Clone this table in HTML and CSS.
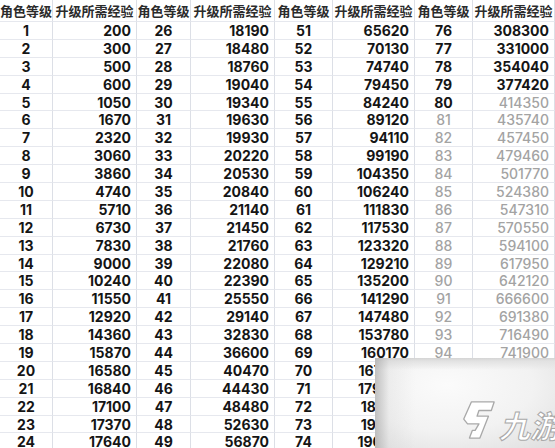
FILE: index.html
```html
<!DOCTYPE html>
<html lang="zh">
<head>
<meta charset="utf-8">
<title>角色等级经验表</title>
<link rel="stylesheet" href="styles.css">
</head>
<body>
<div class="sheet">
<div class="grid">
<div class="c h">角色等级</div><div class="c h">升级所需经验</div><div class="c h">角色等级</div><div class="c h">升级所需经验</div><div class="c h">角色等级</div><div class="c h">升级所需经验</div><div class="c h">角色等级</div><div class="c h">升级所需经验</div>
<div class="c lv">1</div><div class="c xp">200</div><div class="c lv">26</div><div class="c xp">18190</div><div class="c lv">51</div><div class="c xp">65620</div><div class="c lv">76</div><div class="c xp">308300</div>
<div class="c lv">2</div><div class="c xp">300</div><div class="c lv">27</div><div class="c xp">18480</div><div class="c lv">52</div><div class="c xp">70130</div><div class="c lv">77</div><div class="c xp">331000</div>
<div class="c lv">3</div><div class="c xp">500</div><div class="c lv">28</div><div class="c xp">18760</div><div class="c lv">53</div><div class="c xp">74740</div><div class="c lv">78</div><div class="c xp">354040</div>
<div class="c lv">4</div><div class="c xp">600</div><div class="c lv">29</div><div class="c xp">19040</div><div class="c lv">54</div><div class="c xp">79450</div><div class="c lv">79</div><div class="c xp">377420</div>
<div class="c lv">5</div><div class="c xp">1050</div><div class="c lv">30</div><div class="c xp">19340</div><div class="c lv">55</div><div class="c xp">84240</div><div class="c lv">80</div><div class="c xp g">414350</div>
<div class="c lv">6</div><div class="c xp">1670</div><div class="c lv">31</div><div class="c xp">19630</div><div class="c lv">56</div><div class="c xp">89120</div><div class="c lv g">81</div><div class="c xp g">435740</div>
<div class="c lv">7</div><div class="c xp">2320</div><div class="c lv">32</div><div class="c xp">19930</div><div class="c lv">57</div><div class="c xp">94110</div><div class="c lv g">82</div><div class="c xp g">457450</div>
<div class="c lv">8</div><div class="c xp">3060</div><div class="c lv">33</div><div class="c xp">20220</div><div class="c lv">58</div><div class="c xp">99190</div><div class="c lv g">83</div><div class="c xp g">479460</div>
<div class="c lv">9</div><div class="c xp">3860</div><div class="c lv">34</div><div class="c xp">20530</div><div class="c lv">59</div><div class="c xp">104350</div><div class="c lv g">84</div><div class="c xp g">501770</div>
<div class="c lv">10</div><div class="c xp">4740</div><div class="c lv">35</div><div class="c xp">20840</div><div class="c lv">60</div><div class="c xp">106240</div><div class="c lv g">85</div><div class="c xp g">524380</div>
<div class="c lv">11</div><div class="c xp">5710</div><div class="c lv">36</div><div class="c xp">21140</div><div class="c lv">61</div><div class="c xp">111830</div><div class="c lv g">86</div><div class="c xp g">547310</div>
<div class="c lv">12</div><div class="c xp">6730</div><div class="c lv">37</div><div class="c xp">21450</div><div class="c lv">62</div><div class="c xp">117530</div><div class="c lv g">87</div><div class="c xp g">570550</div>
<div class="c lv">13</div><div class="c xp">7830</div><div class="c lv">38</div><div class="c xp">21760</div><div class="c lv">63</div><div class="c xp">123320</div><div class="c lv g">88</div><div class="c xp g">594100</div>
<div class="c lv">14</div><div class="c xp">9000</div><div class="c lv">39</div><div class="c xp">22080</div><div class="c lv">64</div><div class="c xp">129210</div><div class="c lv g">89</div><div class="c xp g">617950</div>
<div class="c lv">15</div><div class="c xp">10240</div><div class="c lv">40</div><div class="c xp">22390</div><div class="c lv">65</div><div class="c xp">135200</div><div class="c lv g">90</div><div class="c xp g">642120</div>
<div class="c lv">16</div><div class="c xp">11550</div><div class="c lv">41</div><div class="c xp">25550</div><div class="c lv">66</div><div class="c xp">141290</div><div class="c lv g">91</div><div class="c xp g">666600</div>
<div class="c lv">17</div><div class="c xp">12920</div><div class="c lv">42</div><div class="c xp">29140</div><div class="c lv">67</div><div class="c xp">147480</div><div class="c lv g">92</div><div class="c xp g">691380</div>
<div class="c lv">18</div><div class="c xp">14360</div><div class="c lv">43</div><div class="c xp">32830</div><div class="c lv">68</div><div class="c xp">153780</div><div class="c lv g">93</div><div class="c xp g">716490</div>
<div class="c lv">19</div><div class="c xp">15870</div><div class="c lv">44</div><div class="c xp">36600</div><div class="c lv">69</div><div class="c xp">160170</div><div class="c lv g">94</div><div class="c xp g">741900</div>
<div class="c lv">20</div><div class="c xp">16580</div><div class="c lv">45</div><div class="c xp">40470</div><div class="c lv">70</div><div class="c xp">167820</div><div class="c lv g">95</div><div class="c xp g">767700</div>
<div class="c lv">21</div><div class="c xp">16840</div><div class="c lv">46</div><div class="c xp">44430</div><div class="c lv">71</div><div class="c xp">179450</div><div class="c lv g">96</div><div class="c xp g">793870</div>
<div class="c lv">22</div><div class="c xp">17100</div><div class="c lv">47</div><div class="c xp">48480</div><div class="c lv">72</div><div class="c xp">182210</div><div class="c lv g">97</div><div class="c xp g">820430</div>
<div class="c lv">23</div><div class="c xp">17370</div><div class="c lv">48</div><div class="c xp">52630</div><div class="c lv">73</div><div class="c xp">194120</div><div class="c lv g">98</div><div class="c xp g">847380</div>
<div class="c lv">24</div><div class="c xp">17640</div><div class="c lv">49</div><div class="c xp">56870</div><div class="c lv">74</div><div class="c xp">196260</div><div class="c lv g">99</div><div class="c xp g">874720</div>
</div>
<div class="mark">
<svg class="mark-icon" viewBox="0 0 40 44" width="38" height="42" aria-hidden="true">
<path d="M13 3 L37 3 L34 12 L21 12 L19 18 L31 18 L22 41 L11 41 L14 33 L17 33 L21 26 L9 26 L5 21 Z" fill="#ffffff" stroke="#a9a9a9" stroke-width="1.4" stroke-linejoin="round"/>
</svg>
<span class="mark-text">九游</span>
</div>
</div>
</body>
</html>
```
FILE: styles.css
```css
html, body {
  margin: 0;
  padding: 0;
  background: #ffffff;
}
.sheet {
  position: relative;
  width: 555px;
  height: 448px;
  overflow: hidden;
}
.grid {
  display: grid;
  grid-template-columns: 53px 84px 54px 84px 58px 82px 58px 82px;
  grid-template-rows: 22px repeat(24, 17.9px);
}
.c {
  box-sizing: border-box;
  border-right: 1px solid #dcdfe6;
  border-bottom: 1px solid #e6e8ee;
  font-family: Inter, "Liberation Sans", Arial, sans-serif;
  font-weight: 700;
  font-size: 14px;
  color: #151515;
  display: flex;
  align-items: center;
  white-space: nowrap;
  overflow: hidden;
}
.h {
  font-family: "Noto Sans CJK SC", "Noto Sans", sans-serif;
  font-size: 13px;
  font-weight: 700;
  color: #2b2b2b;
  justify-content: center;
}
.lv {
  justify-content: center;
}
.xp {
  justify-content: flex-end;
  padding-right: 5px;
}
.g {
  color: #a3a3a3;
  font-weight: 500;
}
.mark {
  position: absolute;
  left: 375px;
  top: 358px;
  right: 0;
  bottom: 0;
  background:
    linear-gradient(to right, rgba(150,150,150,0.55) 0px, rgba(200,200,200,0.2) 14px, rgba(255,255,255,0) 40px),
    linear-gradient(to bottom, #d4d4d4 0px, #e2e2e2 3px, rgba(255,255,255,0) 12px),
    radial-gradient(ellipse 120% 130% at 40% 30%, #fbfbfb 0%, #f2f2f2 40%, #dadada 80%, #c9c9c9 100%);
  display: flex;
  align-items: flex-end;
  justify-content: flex-end;
  gap: 2px;
  padding: 0 0 7px 0;
}
.mark-icon {
  display: block;
}
.mark-text {
  font-family: "Noto Sans CJK SC", sans-serif;
  font-weight: 700;
  font-style: italic;
  font-size: 31px;
  line-height: 32px;
  color: #ffffff;
  -webkit-text-stroke: 1px #a9a9a9;
  margin-right: -6px;
}
```
